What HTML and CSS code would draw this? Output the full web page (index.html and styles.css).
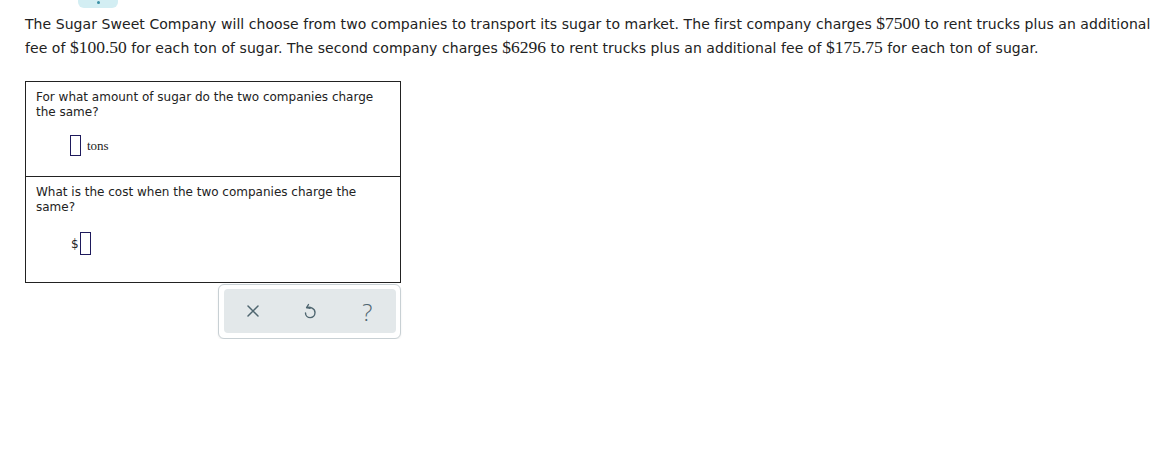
FILE: index.html
```html
<!DOCTYPE html>
<html>
<head>
<meta charset="utf-8">
<link rel="stylesheet" href="styles.css">
</head>
<body>
<div class="page">
  <div class="tab-wrap"><div class="tab"><span class="tab-dot"></span></div></div>
  <p class="prompt">The Sugar Sweet Company will choose from two companies to transport its sugar to market. The first company charges <span class="num">$7500</span> to rent trucks plus an additional fee of <span class="num">$100.50</span> for each ton of sugar. The second company charges <span class="num">$6296</span> to rent trucks plus an additional fee of <span class="num">$175.75</span> for each ton of sugar.</p>
  <div class="answers">
    <div class="part part-one">
      <div class="question">For what amount of sugar do the two companies charge the same?</div>
      <div class="answer-row">
        <span class="input"></span><span class="unit">tons</span>
      </div>
    </div>
    <div class="part part-two">
      <div class="question">What is the cost when the two companies charge the same?</div>
      <div class="answer-row answer-row-two">
        <span class="dollar">$</span><span class="input input-tall"></span>
      </div>
    </div>
  </div>
  <div class="toolbar-row">
    <div class="toolbar">
      <div class="toolbar-inner">
        <button class="tool" aria-label="Clear">
          <svg width="14" height="14" viewBox="0 0 14 14"><path d="M2 2 L12 12 M12 2 L2 12" stroke="#4f6670" stroke-width="1.5" fill="none" stroke-linecap="round"/></svg>
        </button>
        <button class="tool" aria-label="Undo">
          <svg width="14" height="18" viewBox="0 0 14 18"><path d="M5.5 2.5 L3.6 5.6 L7 6.4" stroke="#4f6670" stroke-width="1.4" fill="none" stroke-linecap="round" stroke-linejoin="round"/><path d="M3.8 5.6 C 7 4.6, 12 6.2, 12 10.6 C 12 13.6, 9.8 15.6, 7.2 15.6 C 4.6 15.6, 2.5 13.6, 2.5 11" stroke="#4f6670" stroke-width="1.4" fill="none" stroke-linecap="round"/></svg>
        </button>
        <button class="tool help" aria-label="Help">?</button>
      </div>
    </div>
  </div>
</div>
</body>
</html>
```
FILE: styles.css
```css
html, body {
  margin: 0;
  padding: 0;
  background: #ffffff;
}
.page {
  padding: 0 0 0 25px;
  font-family: "DejaVu Sans", Verdana, sans-serif;
  color: #222222;
}
.tab-wrap {
  height: 8px;
  padding-left: 53px;
}
.tab {
  width: 40px;
  height: 8px;
  background: #d3eef3;
  border-radius: 0 0 6px 6px;
  display: flex;
  justify-content: center;
}
.tab-dot {
  width: 3px;
  height: 3px;
  border-radius: 50%;
  background: #3a8fa5;
  margin-top: 1px;
}
.prompt {
  margin: 4px 0 0 0;
  font-size: 14px;
  line-height: 24px;
  width: 1132px;
  letter-spacing: 0.06px;
}
.num {
  font-family: "Liberation Serif", "Times New Roman", serif;
  font-size: 17.5px;
  line-height: 1;
  letter-spacing: 0;
}
.answers {
  margin-top: 21px;
  width: 374px;
  border: 1px solid #222222;
}
.part {
  padding: 8px 10px 0 10px;
}
.part-one {
  height: 86px;
  border-bottom: 1px solid #222222;
}
.part-two {
  height: 97px;
}
.question {
  font-size: 12px;
  line-height: 15px;
  color: #222222;
}
.answer-row {
  display: flex;
  align-items: center;
  padding-left: 34px;
  margin-top: 15px;
}
.answer-row-two {
  margin-top: 17px;
  padding-left: 35px;
}
.input {
  display: inline-block;
  width: 9px;
  height: 19px;
  border: 1px solid #1e1a5c;
  background: #ffffff;
}
.input-tall {
  height: 21px;
}
.unit {
  font-family: "Liberation Serif", "Times New Roman", serif;
  font-size: 13px;
  margin-left: 6px;
  color: #222222;
}
.dollar {
  font-size: 12px;
  color: #222222;
  margin-right: 1px;
}
.toolbar-row {
  padding-left: 193px;
  margin-top: 1px;
}
.toolbar {
  width: 183px;
  height: 55px;
  border: 1px solid #c8d0d4;
  border-radius: 6px;
  background: #ffffff;
  box-shadow: 0 1px 2px rgba(0,0,0,0.08);
  padding: 4px 4px 5px 5px;
  box-sizing: border-box;
}
.toolbar-inner {
  height: 44px;
  background: #e3e8ea;
  border-radius: 4px;
  display: flex;
  justify-content: space-around;
  align-items: center;
}
.tool {
  background: transparent;
  border: none;
  padding: 0;
  width: 30px;
  height: 30px;
  display: flex;
  align-items: center;
  justify-content: center;
  cursor: pointer;
}
.help {
  font-family: "Open Sans", "DejaVu Sans", sans-serif;
  font-size: 24px;
  font-weight: 300;
  color: #4f6670;
}
```
